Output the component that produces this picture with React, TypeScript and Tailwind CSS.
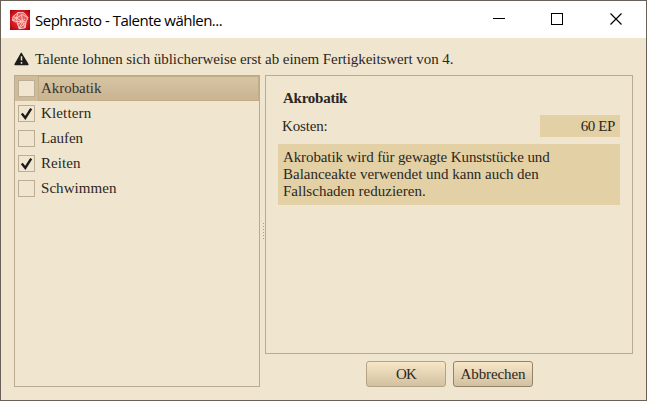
import React from "react";

type Talent = { name: string; checked: boolean; spacing: string };

const talents: Talent[] = [
  { name: "Akrobatik", checked: false, spacing: "tracking-[-0.05px]" },
  { name: "Klettern", checked: true, spacing: "tracking-[0.15px]" },
  { name: "Laufen", checked: false, spacing: "tracking-[-0.1px]" },
  { name: "Reiten", checked: true, spacing: "tracking-[0.05px]" },
  { name: "Schwimmen", checked: false, spacing: "tracking-[0.05px]" },
];

function AppIcon() {
  return (
    <svg width="20" height="20" viewBox="0 0 20 20" className="shrink-0">
      <defs>
        <radialGradient id="red" r="0.7">
          <stop offset="0" stopColor="#e4343a" />
          <stop offset="0.65" stopColor="#d3141c" />
          <stop offset="1" stopColor="#8e080d" />
        </radialGradient>
      </defs>
      <rect width="20" height="20" fill="url(#red)" />
      <path d="M2.500 7 7 3l6-.5 5 5-1.500 4.500-.5 5.500-7 1.500-1-4.500-5-3z" fill="#e96f70" opacity=".75" />
      <path
        d="M2.500 10.500 3 6.500 8 2.500l6 .3 4 5-2 4-1 6-6 1M8 2.500 6.500 8l6-3.500L18 8M3 6.500 6.500 8l-4 2.500 4.500 1L6.500 8l6 3.500-1-7M7 11.500l5.500 0 3.500.5M7 11.500l2 7 3.500-7 2.500 6.500M7 15l8-6M9 18.500l7-6"
        fill="none"
        stroke="#f8c4c0"
        strokeWidth="1"
      />
    </svg>
  );
}

function TitleBar() {
  return (
    <div className="flex h-[37px] shrink-0 items-center bg-white pl-[9px]">
      <AppIcon />
      <span className="ml-[5px] flex-1 whitespace-nowrap pt-px font-['Open_Sans','Noto_Sans',sans-serif] text-[15px] tracking-[-0.5px] text-black">
        Sephrasto - Talente wählen...
      </span>
      <svg width="177" height="37" viewBox="0 0 177 37" fill="none" stroke="#000" shapeRendering="crispEdges">
        <path d="M24 17.500h12" />
        <rect x="82.500" y="12.500" width="11" height="11" />
        <path d="m141.500 12.500 11 11m0-11-11 11" shapeRendering="auto" strokeWidth="1.200" />
      </svg>
    </div>
  );
}

function CheckBox({ checked }: { checked: boolean }) {
  return (
    <span className="flex size-[17px] shrink-0 items-center justify-center border border-[#bcae94] bg-[#f0e6cf]">
      {checked && (
        <svg width="15" height="15" viewBox="0 0 15 15" fill="none">
          <path d="M2.800 7.500 6.300 12 12.200 2.700" stroke="#1d1918" strokeWidth="2.400" />
        </svg>
      )}
    </span>
  );
}

function TalentRow({ talent, selected }: { talent: Talent; selected: boolean }) {
  return (
    <div className={"flex h-[25px] items-center pl-[3px] " + (selected ? "bg-[#cfbb98]" : "")}>
      <CheckBox checked={talent.checked} />
      <span
        className={
          "ml-[3px] flex h-[25px] flex-1 items-center border pb-[2px] pl-[2px] leading-[20px] " +
          talent.spacing +
          (selected
            ? " border-[#c2ad88] bg-linear-to-b from-[#d5c4a3] to-[#cab491] text-[#38322b]"
            : " border-transparent")
        }
      >
        {talent.name}
      </span>
    </div>
  );
}

function PushButton({ label, focused = false }: { label: string; focused?: boolean }) {
  return (
    <button
      className={
        "flex h-[26px] w-[80px] items-center justify-center rounded-[3px] border bg-linear-to-b from-[#f7e7c6] to-[#d1c1a0] " +
        (focused ? "border-[#94836a] tracking-[-0.1px]" : "border-[#b3a283] tracking-[-0.8px]")
      }
    >
      {label}
    </button>
  );
}

export default function App() {
  return (
    <div className="flex h-[401px] w-[647px] flex-col overflow-hidden border border-[#6b6058] bg-[#f0e6cf] font-['Liberation_Serif',serif] text-[15px] text-[#2b2723]">
      <TitleBar />
      <div className="flex min-h-0 flex-1 flex-col px-[13px] pb-[13px] pt-[11px]">
        <div className="flex h-[20px] items-center">
          <svg width="15" height="14" viewBox="0 0 15 14" className="shrink-0">
            <path d="M7.500.5 14.500 12q.5 1.200-.7 1.200H1.200Q0 13.200.5 12L6.700 1q.8-1 1.600 0z" fill="#1f1c1b" />
            <path d="M7.500 4.200v4.300M7.500 10v1.700" stroke="#f0e6cf" strokeWidth="1.500" />
          </svg>
          <span className="ml-[6px] whitespace-nowrap tracking-[-0.065px]">
            Talente lohnen sich üblicherweise erst ab einem Fertigkeitswert von 4.
          </span>
        </div>
        <div className="mt-[6px] flex min-h-0 flex-1">
          <div className="w-[246px] shrink-0 border border-[#b9ab92]">
            {talents.map((talent, index) => (
              <TalentRow key={talent.name} talent={talent} selected={index === 0} />
            ))}
          </div>
          <div className="flex w-[5px] shrink-0 flex-col items-center justify-center gap-[2px] pl-[2px]">
            {[0, 1, 2, 3, 4, 5].map((dot) => (
              <span key={dot} className="size-px bg-[#a99b84]" />
            ))}
          </div>
          <div className="flex flex-1 flex-col">
            <div className="h-[279px] shrink-0 border border-[#b9ab92] pl-[12px] pr-[12px] pt-[12px]">
              <h1 className="pl-[5px] text-[15px] font-bold leading-[21px] tracking-[-0.25px]">Akrobatik</h1>
              <div className="mt-[6px] flex h-[22px] items-center justify-between pl-[4px]">
                <span className="tracking-[-0.15px]">Kosten:</span>
                <span className="flex h-[22px] w-[80px] items-center justify-end bg-[#e3d1a5] pr-[5px] tracking-[-0.4px]">
                  60 EP
                </span>
              </div>
              <div className="mt-[7px] h-[61px] whitespace-nowrap bg-[#e3d1a5] pl-[5px] pt-[5px] leading-[17px]">
                <p className="tracking-[-0.11px]">Akrobatik wird für gewagte Kunststücke und</p>
                <p className="tracking-[-0.01px]">Balanceakte verwendet und kann auch den</p>
                <p className="tracking-[0.01px]">Fallschaden reduzieren.</p>
              </div>
            </div>
            <div className="mt-[7px] flex gap-[7px] pl-[101px]">
              <PushButton label="OK" />
              <PushButton label="Abbrechen" focused />
            </div>
          </div>
        </div>
      </div>
    </div>
  );
}
